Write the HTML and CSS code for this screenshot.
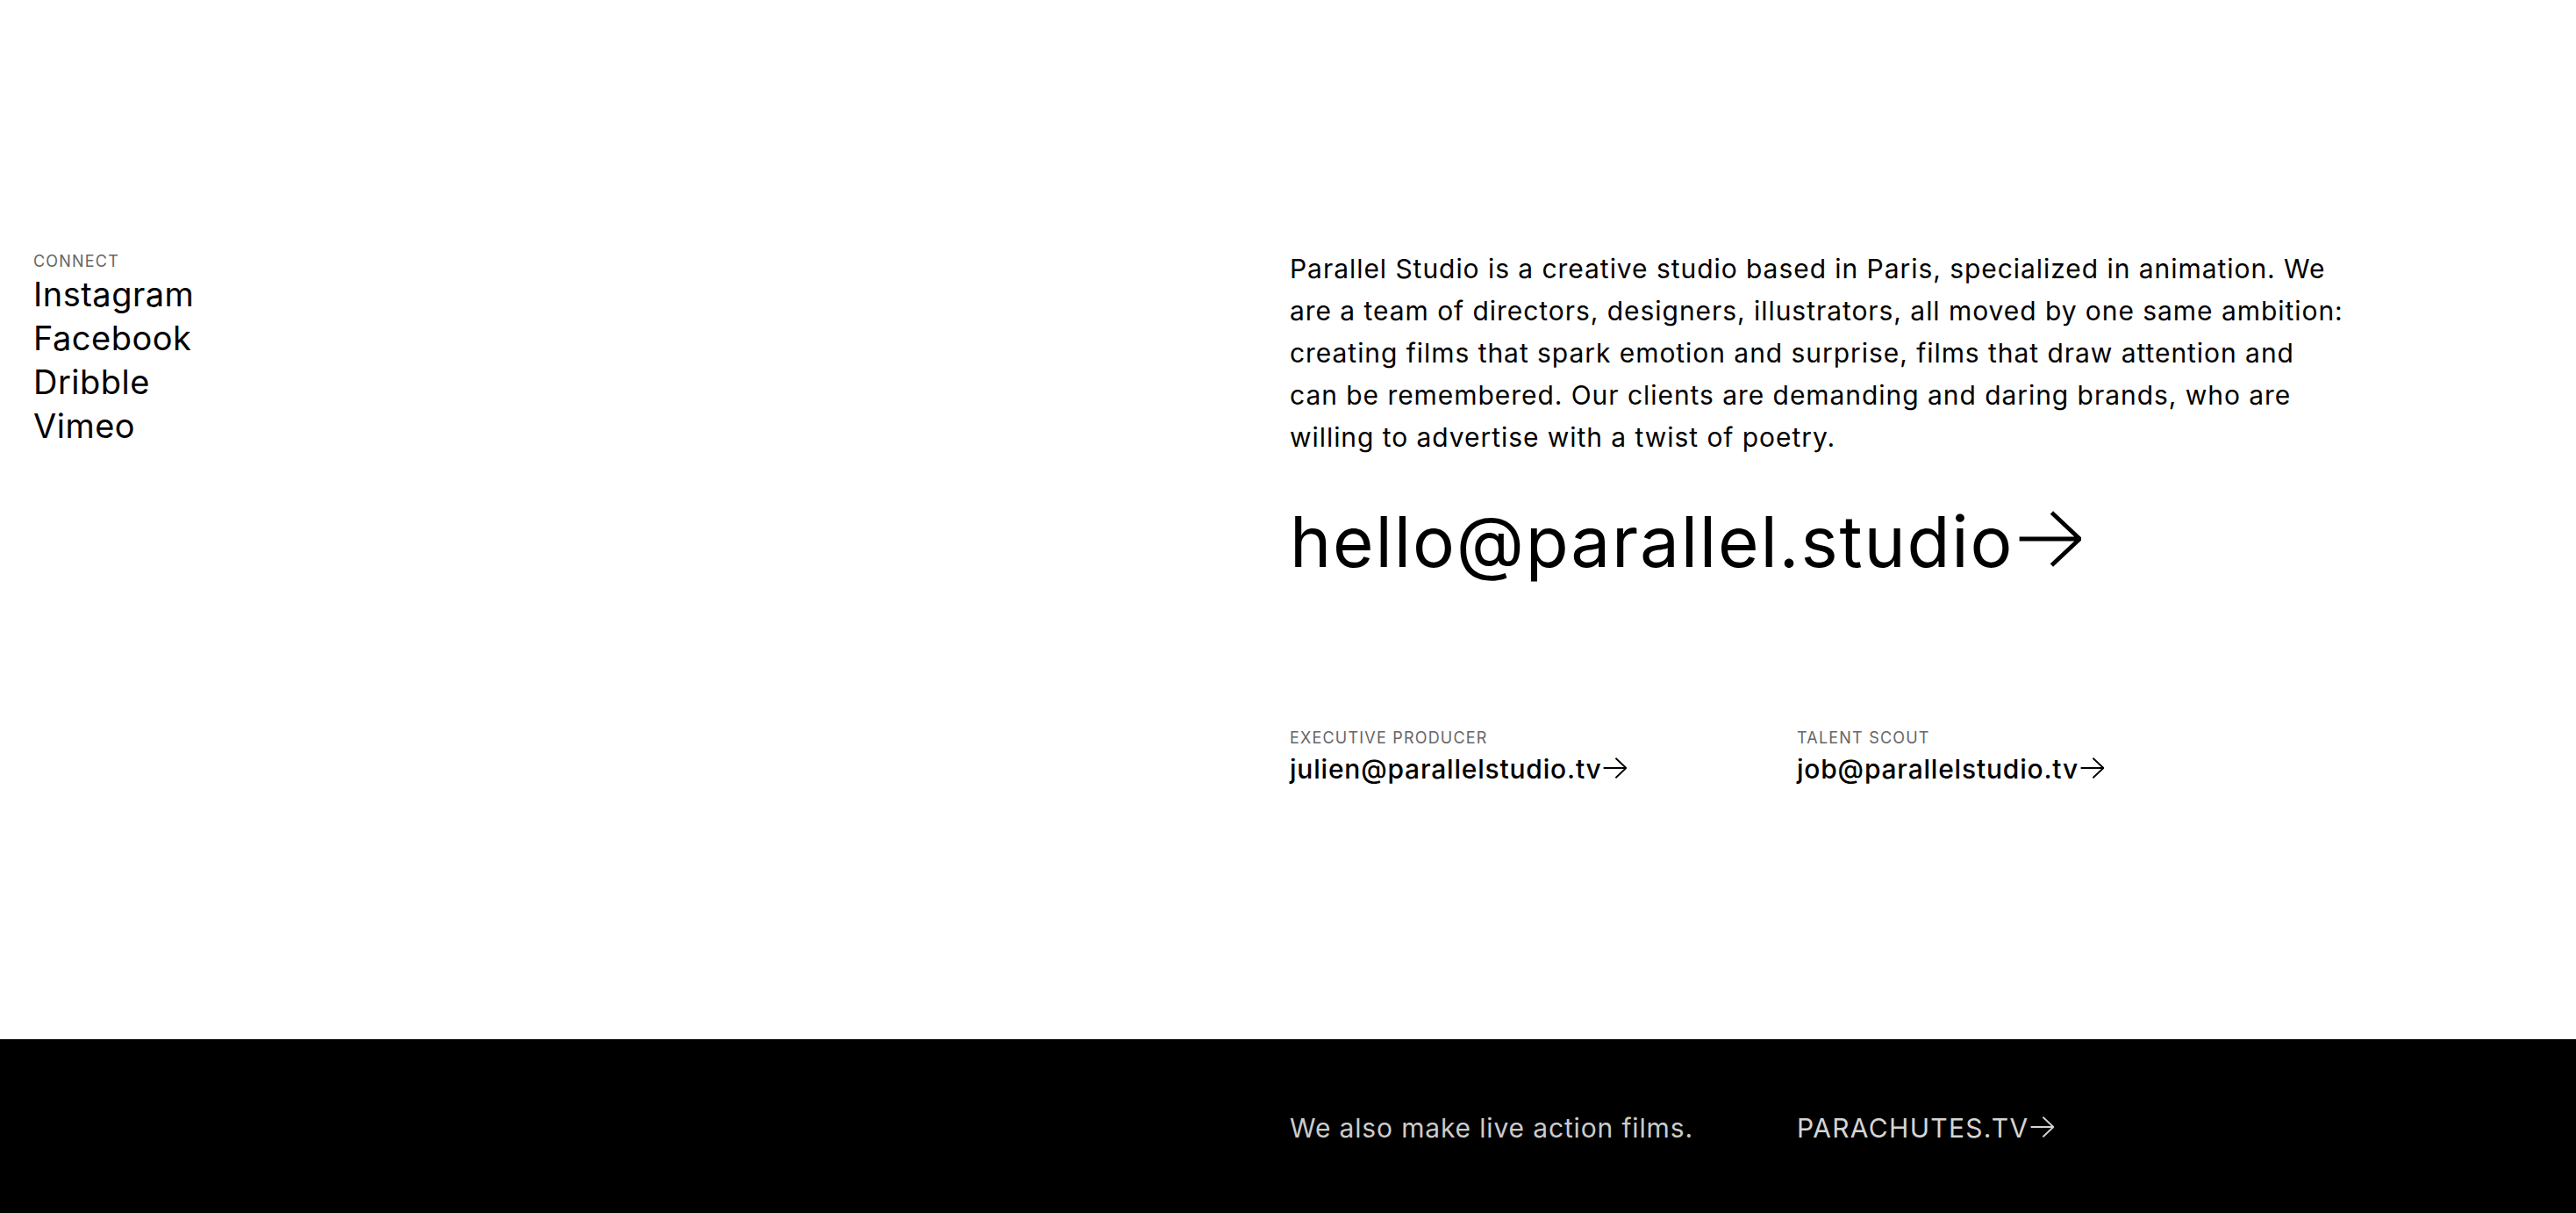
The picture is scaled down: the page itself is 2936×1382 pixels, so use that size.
FILE: index.html
```html
<!DOCTYPE html>
<html lang="en">
<head>
<meta charset="utf-8">
<title>Contact — Parallel Studio</title>
<link rel="stylesheet" href="styles.css">
</head>
<body>
<main class="contact">
  <nav class="connect">
    <div class="label">CONNECT</div>
    <ul class="social">
      <li><a href="#">Instagram</a></li>
      <li><a href="#">Facebook</a></li>
      <li><a href="#">Dribble</a></li>
      <li><a href="#">Vimeo</a></li>
    </ul>
  </nav>
  <section class="info">
    <p class="intro">Parallel Studio is a creative studio based in Paris, specialized in animation. We are a team of directors, designers, illustrators, all moved by one same ambition: creating films that spark emotion and surprise, films that draw attention and can be remembered. Our clients are demanding and daring brands, who are willing to advertise with a twist of poetry.</p>
    <a class="big-mail" href="#">hello@parallel.studio<svg class="arrow" viewBox="0 0 90 80" aria-hidden="true"><path d="M2 40H88M48 2.5L88 40L48 77.5"/></svg></a>
    <div class="people">
      <div class="person">
        <div class="label">EXECUTIVE PRODUCER</div>
        <a class="mail" href="#">julien@parallelstudio.tv<svg class="arrow" viewBox="0 0 90 80" aria-hidden="true"><path d="M2 40H88M48 2.5L88 40L48 77.5"/></svg></a>
      </div>
      <div class="person">
        <div class="label">TALENT SCOUT</div>
        <a class="mail" href="#">job@parallelstudio.tv<svg class="arrow" viewBox="0 0 90 80" aria-hidden="true"><path d="M2 40H88M48 2.5L88 40L48 77.5"/></svg></a>
      </div>
    </div>
  </section>
</main>
<footer class="footer">
  <div class="footer-spacer"></div>
  <div class="footer-row">
    <span class="footer-text">We also make live action films.</span>
    <a class="footer-link" href="#">PARACHUTES.TV<svg class="arrow" viewBox="0 0 90 80" aria-hidden="true"><path d="M2 40H88M48 2.5L88 40L48 77.5"/></svg></a>
  </div>
</footer>
</body>
</html>
```

FILE: styles.css
```css
* { box-sizing: border-box; }
html, body { margin: 0; padding: 0; }
body {
  font-family: Inter, "Noto Sans", sans-serif;
  color: #000;
  background: #fff;
  min-height: 100vh;
  display: flex;
  flex-direction: column;
}
a { color: inherit; text-decoration: none; }

.contact {
  flex: 1;
  display: grid;
  grid-template-columns: 1fr 1fr;
  column-gap: 4px;
  padding: 282px 38px 0;
  align-items: start;
}

.label {
  font-size: 18px;
  line-height: 22px;
  color: #666;
  letter-spacing: 1.2px;
}

.connect { padding-top: 5px; }
.social {
  list-style: none;
  margin: 1px 0 0;
  padding: 0;
}
.social li {
  font-size: 38px;
  line-height: 50px;
  letter-spacing: 0.5px;
}

.intro {
  margin: 0;
  max-width: 1203px;
  font-size: 30px;
  line-height: 48px;
  letter-spacing: 0.95px;
}

.big-mail {
  display: block;
  margin-top: 55px;
  font-size: 80px;
  line-height: 80px;
  letter-spacing: 1.8px;
}

.arrow {
  width: 0.9em;
  height: 0.8em;
  margin-left: 0.06em;
  fill: none;
  stroke: currentColor;
  stroke-width: 6;
  vertical-align: 0;
}

.people {
  display: grid;
  grid-template-columns: 578px 1fr;
  margin-top: 173px;
}
.mail {
  display: block;
  margin-top: 6px;
  font-size: 30px;
  line-height: 36px;
  font-weight: 500;
  letter-spacing: 0.8px;
}

.footer {
  height: 198px;
  background: #000;
  color: #cbcbcb;
  display: grid;
  grid-template-columns: 1fr 1fr;
  column-gap: 4px;
  padding: 4px 38px 0;
  align-items: center;
}
.footer-row {
  display: grid;
  grid-template-columns: 578px 1fr;
  align-items: center;
  font-size: 30px;
  line-height: 36px;
  letter-spacing: 0.85px;
}
.footer-link { color: #d4d4d4; letter-spacing: 1.3px; }
```
